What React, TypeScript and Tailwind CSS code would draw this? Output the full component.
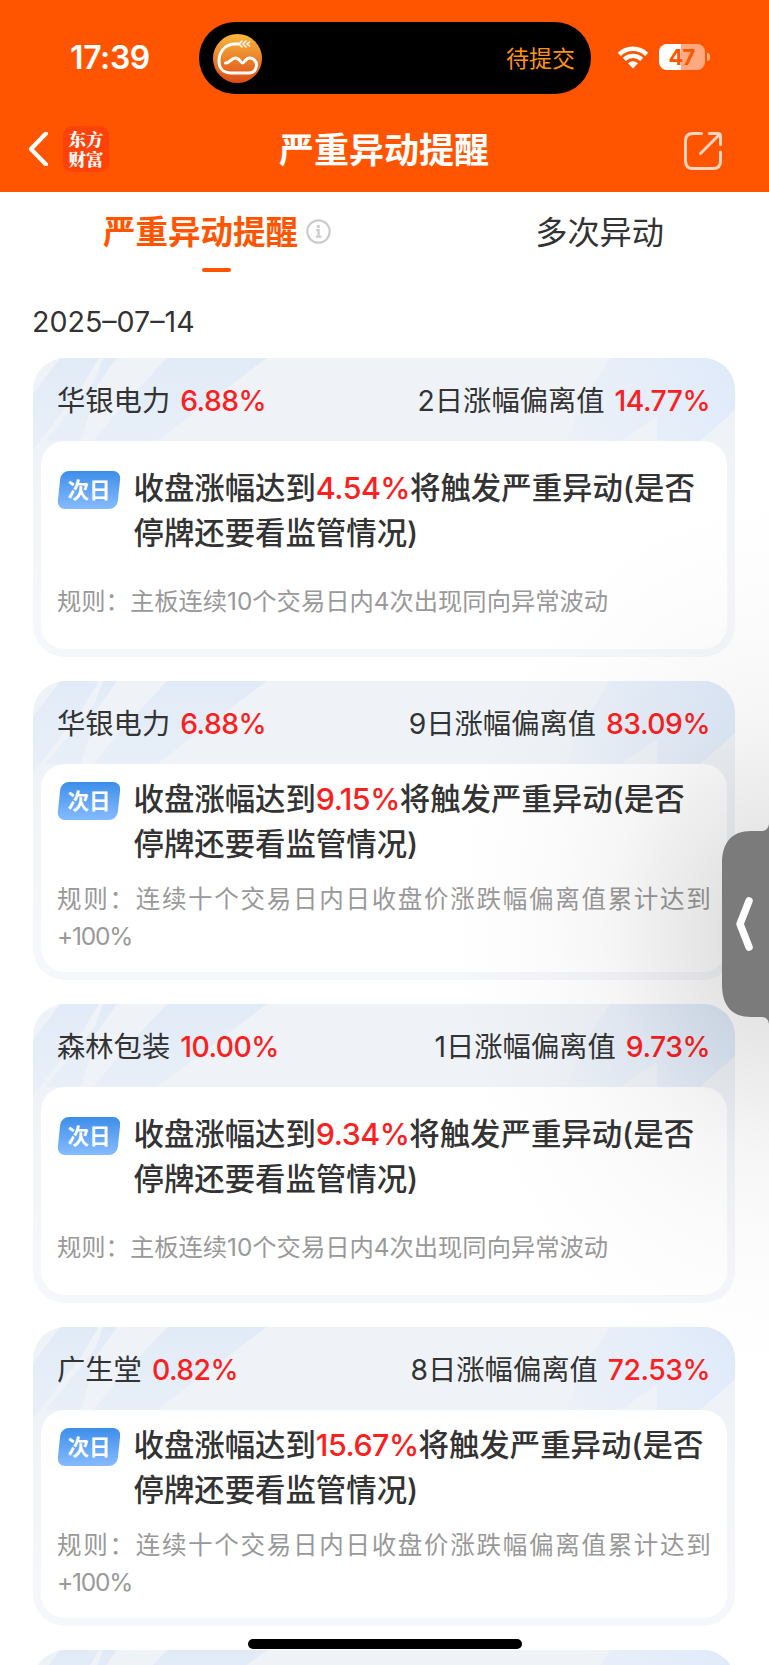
import type { ReactNode } from 'react';

interface Alert {
  name: string;
  change: string;
  days: number;
  deviation: string;
  trigger: string;
  rule: string;
  wide: boolean;
}

const ALERTS: Alert[] = [
  { name: '华银电力', change: '6.88%', days: 2, deviation: '14.77%', trigger: '4.54%', rule: '主板连续10个交易日内4次出现同向异常波动', wide: false },
  { name: '华银电力', change: '6.88%', days: 9, deviation: '83.09%', trigger: '9.15%', rule: '连续十个交易日内日收盘价涨跌幅偏离值累计达到', wide: true },
  { name: '森林包装', change: '10.00%', days: 1, deviation: '9.73%', trigger: '9.34%', rule: '主板连续10个交易日内4次出现同向异常波动', wide: false },
  { name: '广生堂', change: '0.82%', days: 8, deviation: '72.53%', trigger: '15.67%', rule: '连续十个交易日内日收盘价涨跌幅偏离值累计达到', wide: true },
];

function StatusBar() {
  return (
    <div className="flex h-[116px] items-center text-white">
      <div className="ml-[70px] w-[129px] text-[32px] font-semibold leading-none tracking-[-0.4px]">17:39</div>
      <div className="flex h-[72px] w-[392px] items-center justify-between rounded-full bg-black pl-[14px] pr-[16px]">
        <svg width="49" height="49" viewBox="0 0 49 49" fill="none" stroke="white" strokeLinecap="round" strokeLinejoin="round">
          <defs>
            <linearGradient id="logo" x1="0" y1="0" x2="0" y2="1">
              <stop offset="0" stopColor="#f8b83e" />
              <stop offset="1" stopColor="#dc4b16" />
            </linearGradient>
          </defs>
          <circle cx="24.5" cy="24.5" r="24.5" fill="url(#logo)" stroke="none" />
          <path d="M26 10H22C12 10 6 18 6 27C6 35 11 39 18 39H36C41 39 43.500 35 43.500 31C43.500 26.500 40 24 36.500 24C32.500 24 31.500 29 29.500 29C27.500 29 27 24 22.500 24C18 24 17.500 29 12.500 29" strokeWidth="3" />
          <path d="M29 7L26 10L29 13M33 7L30 10L33 13M36.500 8L34 10L36.500 12" strokeWidth="1.600" />
        </svg>
        <span className="pt-[2px] text-[23px] leading-none text-[#ff9213]">待提交</span>
      </div>
      <svg className="ml-[26px] mt-[-2px]" width="32" height="24" viewBox="0 0 32 24" fill="none" stroke="white" strokeWidth="4.400">
        <path d="M2.300 9.300C10 1.800 22 1.800 29.700 9.300" />
        <path d="M7.300 14.400C12.300 9.700 19.700 9.700 24.700 14.400" />
        <path d="M16 23.500L11 18.200C14 15.500 18 15.500 21 18.200Z" fill="white" stroke="none" />
      </svg>
      <div className="ml-[10px] mt-[-2px] flex items-center">
        <div className="flex h-[26px] w-[46px] items-center justify-center rounded-[8px] bg-[linear-gradient(90deg,#fff_22px,#ffaa80_22px)] pr-[1px] text-[22px] font-bold leading-none tracking-[-0.8px] text-[#ff5500]">47</div>
        <div className="ml-[2px] h-[8px] w-[3px] rounded-r-full bg-[#ffaa80]" />
      </div>
    </div>
  );
}

function NavBar() {
  return (
    <div className="flex h-[75px] items-center text-white">
      <svg className="ml-[28px] mt-[-9px]" width="20" height="34" viewBox="0 0 20 34" fill="none" stroke="white" strokeWidth="4.200">
        <path d="M18 1.500L3 17L18 32.500" strokeLinejoin="round" strokeLinecap="round" />
      </svg>
      <div className="ml-[15px] mt-[-10px] flex h-[46px] w-[46px] items-center justify-center rounded-[9px] bg-[#ff4208] font-['Noto_Serif_CJK_SC','Noto_Sans_CJK_SC',serif] text-[17.5px] font-black leading-[19.5px]">
        <p className="whitespace-nowrap">
          东方
          <br />
          财富
        </p>
      </div>
      <h1 className="ml-[170px] mt-[-7px] w-[211px] whitespace-nowrap text-[35px] font-bold leading-none">严重异动提醒</h1>
      <svg className="ml-[193px] mt-[-6px]" width="40" height="40" viewBox="0 0 40 40" fill="none" stroke="#ffd5c0" strokeWidth="3" strokeLinecap="round" strokeLinejoin="round">
        <path d="M18.500 2.500H10C5 2.500 2.500 5 2.500 10V30C2.500 35 5 37.500 10 37.500H30C35 37.500 37.500 35 37.500 30V21" />
        <path d="M17.500 22.500L37 3M26.500 2.500H34.500Q37.500 2.500 37.500 5.500V13.500" />
      </svg>
    </div>
  );
}

function Tabs() {
  return (
    <div className="flex h-[96px] shrink-0 justify-between pl-[103px] pr-[105px] pt-[20px]">
      <div className="relative flex h-[40px] items-center text-[#ff5500]">
        <span className="pt-[3px] text-[32.5px] font-bold leading-none">严重异动提醒</span>
        <svg className="ml-[8px]" width="25" height="25" viewBox="0 0 25 25" fill="none" stroke="#cccccc">
          <circle cx="12.500" cy="12.500" r="11.200" strokeWidth="2.200" />
          <path d="M10.200 11.200H12.600V17.500M9.800 17.700H15.400" strokeWidth="2.200" />
          <circle cx="12.300" cy="7.500" r="1.700" fill="#cccccc" stroke="none" />
        </svg>
        <div className="absolute left-[99px] top-[56px] h-[4px] w-[29px] rounded-full bg-[#ff5500]" />
      </div>
      <div className="flex h-[40px] items-center pt-[3px] text-[32.2px] leading-none text-[#333]">多次异动</div>
    </div>
  );
}

function CardBackdrop() {
  return (
    <svg className="absolute inset-0" width="702" height="299" viewBox="0 0 702 299" fill="none">
      <defs>
        <linearGradient id="streak" x1="0" y1="0" x2="0" y2="83" gradientUnits="userSpaceOnUse">
          <stop offset="0" stopColor="#e1ebf7" />
          <stop offset="1" stopColor="#e8eff8" />
        </linearGradient>
        <linearGradient id="corner" x1="700" y1="0" x2="545" y2="83" gradientUnits="userSpaceOnUse">
          <stop offset="0" stopColor="#dfeafa" />
          <stop offset="1" stopColor="#ecf1f8" />
        </linearGradient>
      </defs>
      <path d="M27 0H66L48 30L0 92V36Z" fill="url(#streak)" />
      <path d="M70 0H84L64 28L48 83H12L38 52L62 22Z" fill="url(#streak)" />
      <path d="M134 0H234L124 83H60L92 45Z" fill="url(#streak)" />
      <path d="M577 0H702V52L667 83H624V58L588 83H534L542 58L557 30Z" fill="url(#corner)" />
    </svg>
  );
}

function Red({ children }: { children: ReactNode }) {
  return <span className="font-medium tracking-[-0.5px] text-[#fb2020]">{children}</span>;
}

function AlertCard({ alert }: { alert: Alert }) {
  return (
    <section className="relative h-[299px] w-[702px] shrink-0 overflow-hidden rounded-[32px] bg-[linear-gradient(180deg,#eff3f8_30%,#f6f7fa_90%)]">
      <CardBackdrop />
      <div className="relative flex h-[83px] items-center justify-between pl-[24px] pr-[25px] pt-[3px] text-[28.3px] leading-none text-[#333]">
        <div className="flex items-center gap-[10px]">
          <span>{alert.name}</span>
          <Red>{alert.change}</Red>
        </div>
        <div className="flex items-center gap-[10px]">
          <span>{alert.days}日涨幅偏离值</span>
          <Red>{alert.deviation}</Red>
        </div>
      </div>
      <div className={`relative mx-[8px] h-[208px] rounded-[24px] bg-white px-[16px] ${alert.wide ? 'pt-[13px]' : 'pt-[25px]'}`}>
        <div className="flex">
          <div className="relative mt-[5px] flex h-[38px] w-[64px] shrink-0 items-center justify-center text-[21.5px] font-bold leading-none text-white">
            <div className="absolute inset-y-0 left-[2px] right-[2px] -skew-x-6 rounded-[8px] bg-linear-to-b from-[#3c8ee9] to-[#85bbff]" />
            <span className="relative pt-[1px]">次日</span>
          </div>
          <p className="ml-[12.5px] whitespace-nowrap text-[30.4px] font-medium leading-[45px] text-[#333]">
            收盘涨幅达到<Red>{alert.trigger}</Red>将触发严重异动(是否
            <br />
            停牌还要看监管情况)
          </p>
        </div>
        {alert.wide ? (
          <div className="mt-[14px] whitespace-nowrap text-[24.5px] leading-[37px] text-[#999]">
            <p className="tracking-[1.72px]">规则：{alert.rule}</p>
            <p className="tracking-[-1.2px]">+100%</p>
          </div>
        ) : (
          <p className="mt-[27px] whitespace-nowrap text-[24.3px] leading-[37px] text-[#999]">规则：{alert.rule}</p>
        )}
      </div>
    </section>
  );
}

function SideHandle() {
  return (
    <>
      <div className="pointer-events-none absolute right-0 top-[484px] h-[900px] w-[320px] bg-[radial-gradient(ellipse_320px_440px_at_100%_50%,rgba(0,0,0,0.15)_0%,rgba(0,0,0,0.09)_25%,rgba(0,0,0,0.036)_50%,rgba(0,0,0,0.012)_75%,transparent_100%)]" />
      <svg className="absolute right-0 top-[824px]" width="47" height="200" viewBox="0 0 47 200" fill="none">
        <path d="M47 0Q46 7 40 7H29C10 7 0 18 0 40V160C0 182 10 193 29 193H40Q46 193 47 200Z" fill="#7b7b7b" />
        <path d="M27 77L18 100L27 123" stroke="white" strokeWidth="7.500" strokeLinecap="round" strokeLinejoin="round" />
      </svg>
    </>
  );
}

export default function App() {
  return (
    <main className="relative flex h-[1665px] w-[769px] flex-col overflow-hidden bg-white font-['Inter','Noto_Sans_CJK_SC',sans-serif]">
      <header className="h-[191.500px] shrink-0 bg-[#ff5500]">
        <StatusBar />
        <NavBar />
      </header>
      <Tabs />
      <div className="flex h-[70.500px] shrink-0 items-center pl-[32px] text-[28.6px] leading-none text-[#333]">2025–07–14</div>
      <div className="flex flex-col gap-[24px] pl-[33px]">
        {ALERTS.map((alert, i) => (
          <AlertCard key={i} alert={alert} />
        ))}
        <section className="relative h-[299px] w-[702px] shrink-0 overflow-hidden rounded-[32px] bg-[#eff3f8]">
          <CardBackdrop />
        </section>
      </div>
      <SideHandle />
      <div className="absolute bottom-[16px] left-[248px] h-[10px] w-[274px] rounded-full bg-black" />
    </main>
  );
}
